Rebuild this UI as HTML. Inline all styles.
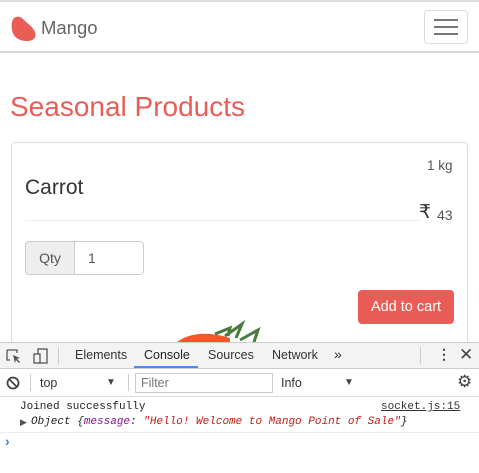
<!DOCTYPE html>
<html><head><style>
*{margin:0;padding:0;box-sizing:border-box}
body{width:479px;height:473px;overflow:hidden;background:#fff;font-family:"Liberation Sans",sans-serif;position:relative}
.a{position:absolute;white-space:nowrap}
.m{font-family:"Liberation Mono",monospace;font-size:11px}
</style></head><body>
<div class="a" style="left:0;top:0;width:479px;height:2px;background:#ddd"></div>
<div class="a" style="left:0;top:51px;width:479px;height:2px;background:#d6d6d6"></div>
<svg class="a" style="left:10px;top:15px" width="28" height="28" viewBox="0 0 28 28"><path d="M6 2C2 3 1 9 2 15 3 22 9 26 17 26 24 26 27 22 25 17 23 12 18 9 14 5 11 2 9 1 6 2Z" fill="#ea5d57"/></svg>
<div class="a" style="left:41px;top:17px;font-size:18.5px;color:#666">Mango</div>
<div class="a" style="left:424px;top:10px;width:44px;height:34px;border:1px solid #ddd;border-radius:4px"></div>
<div class="a" style="left:434px;top:19px;width:24px;height:2px;background:#777;box-shadow:0 7px 0 #777,0 14px 0 #777"></div>
<div class="a" style="left:10px;top:91px;font-size:28px;color:#ea5d57">Seasonal Products</div>
<div class="a" style="left:11px;top:142px;width:457px;height:220px;border:1px solid #ddd;border-radius:4px"></div>
<div class="a" style="left:427px;top:158px;font-size:13.5px;color:#555">1 kg</div>
<div class="a" style="left:25px;top:176px;font-size:21px;color:#333">Carrot</div>
<div class="a" style="left:25px;top:220px;width:395px;height:1px;background:#eee"></div>
<div class="a" style="left:419px;top:201px;font-size:19px;color:#333">₹</div>
<div class="a" style="left:437px;top:207px;font-size:14px;color:#555">43</div>
<div class="a" style="left:25px;top:241px;width:50px;height:34px;background:#eee;border:1px solid #ccc;border-radius:4px 0 0 4px;font-size:14px;color:#555;text-align:center;line-height:32px">Qty</div>
<div class="a" style="left:74px;top:241px;width:70px;height:34px;border:1px solid #ccc;border-radius:0 4px 4px 0;font-size:14px;color:#555;line-height:32px;padding-left:13px">1</div>
<div class="a" style="left:358px;top:290px;width:96px;height:34px;background:#ea5d57;border-radius:4px;color:#fff;font-size:14.5px;text-align:center;line-height:34px">Add to cart</div>
<svg class="a" style="left:170px;top:318px" width="100" height="26"><path d="M5 26C15 16 35 12 60 20L60 26Z" fill="#f05a2a"/><path d="M45 16L60 10 58 18M55 18L72 6 66 20M70 22L88 12 84 24" stroke="#4a7a40" stroke-width="3" fill="none"/></svg>
<div class="a" style="left:0;top:342px;width:479px;height:27px;background:#f3f3f3;border-top:1px solid #ccc;border-bottom:1px solid #ccc"></div>
<svg class="a" style="left:5px;top:348px" width="45" height="16"><path d="M2 2h10v3M2 2v10h3" stroke="#555" fill="none" stroke-width="1.3"/><path d="M8 7l7 3-3 1 3 3-1 1-3-3-1 3z" fill="#555"/><rect x="33" y="1" width="9" height="14" stroke="#555" fill="none" stroke-width="1.3"/><rect x="29" y="6" width="6" height="9" stroke="#555" fill="#f3f3f3" stroke-width="1.3"/></svg>
<div class="a" style="left:58px;top:347px;width:1px;height:17px;background:#ccc"></div>
<div class="a" style="left:75px;top:348px;font-size:12.5px;color:#333">Elements</div>
<div class="a" style="left:144px;top:348px;font-size:12.5px;color:#222">Console</div>
<div class="a" style="left:134px;top:366px;width:64px;height:2px;background:#4a8af4"></div>
<div class="a" style="left:208px;top:348px;font-size:12.5px;color:#333">Sources</div>
<div class="a" style="left:272px;top:348px;font-size:12.5px;color:#333">Network</div>
<div class="a" style="left:334px;top:346px;font-size:14px;color:#333">»</div>
<div class="a" style="left:420px;top:347px;width:1px;height:17px;background:#ccc"></div>
<div class="a" style="left:437px;top:346px;font-size:14px;color:#444;font-weight:bold">⋮</div>
<div class="a" style="left:459px;top:345px;font-size:17px;color:#444">✕</div>
<div class="a" style="left:0;top:396px;width:479px;height:1px;background:#ddd"></div>
<svg class="a" style="left:6px;top:376px" width="14" height="14"><circle cx="7" cy="7" r="5.5" stroke="#444" stroke-width="1.8" fill="none"/><path d="M3 3l8 8" stroke="#444" stroke-width="1.8"/></svg>
<div class="a" style="left:30px;top:374px;width:1px;height:17px;background:#ccc"></div>
<div class="a" style="left:40px;top:376px;font-size:12.5px;color:#333">top</div>
<div class="a" style="left:106px;top:377px;font-size:10px;color:#444">▼</div>
<div class="a" style="left:128px;top:374px;width:1px;height:17px;background:#ccc"></div>
<div class="a" style="left:135px;top:373px;width:138px;height:20px;border:1px solid #ccc"></div>
<div class="a" style="left:141px;top:376px;font-size:12.5px;color:#777">Filter</div>
<div class="a" style="left:281px;top:376px;font-size:12.5px;color:#333">Info</div>
<div class="a" style="left:344px;top:377px;font-size:10px;color:#444">▼</div>
<div class="a" style="left:457px;top:372px;font-size:17px;color:#444">⚙</div>
<div class="a m" style="left:20px;top:401px;color:#222">Joined successfully</div>
<div class="a m" style="left:381px;top:401px;color:#333;text-decoration:underline">socket.js:15</div>
<div class="a" style="left:20px;top:417px;font-size:9px;color:#555">▶</div>
<div class="a m" style="left:31px;top:416px;font-style:italic;color:#222">Object {<span style="color:#881391">message</span>: <span style="color:#c41a16">"Hello! Welcome to Mango Point of Sale"</span>}</div>
<div class="a" style="left:0;top:432px;width:479px;height:1px;background:#eee"></div>
<div class="a" style="left:5px;top:433px;font-size:14px;color:#367cf1;font-weight:bold">›</div>
</body></html>
